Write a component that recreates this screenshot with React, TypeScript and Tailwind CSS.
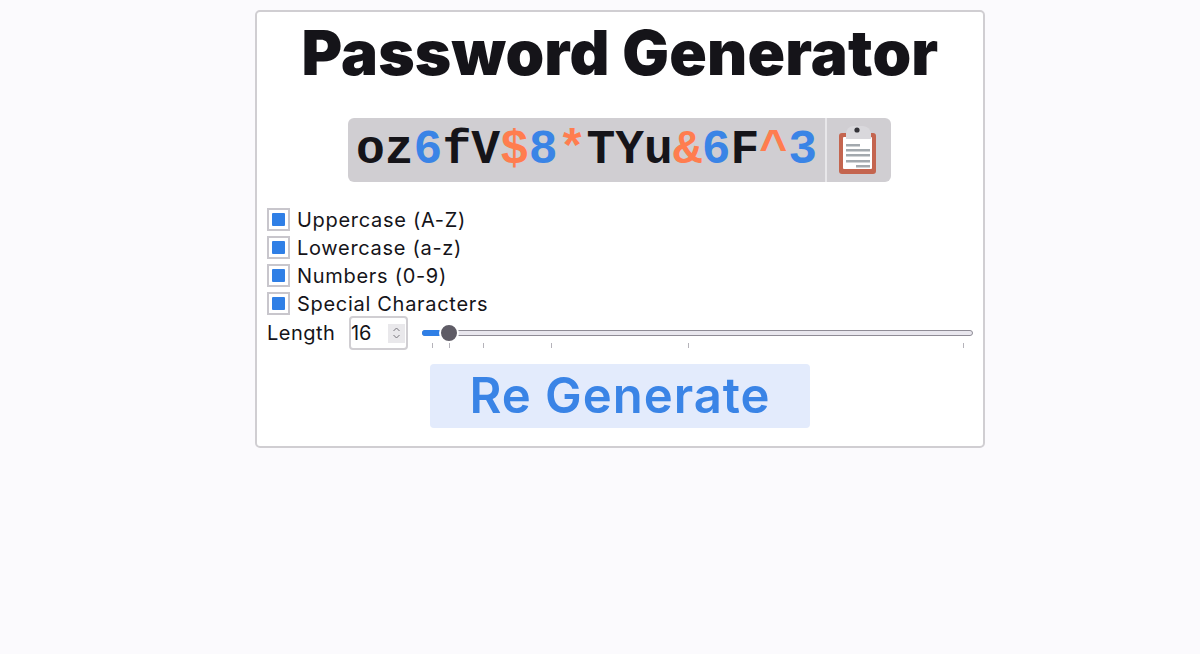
const password: [string, string][] = [
  ['oz', 'text-[#151419]'],
  ['6', 'text-[#3a84e6]'],
  ['fV', 'text-[#151419]'],
  ['$', 'text-[#ff7d4f]'],
  ['8', 'text-[#3a84e6]'],
  ['*', 'text-[#ff7d4f]'],
  ['TYu', 'text-[#151419]'],
  ['&', 'text-[#ff7d4f]'],
  ['6', 'text-[#3a84e6]'],
  ['F', 'text-[#151419]'],
  ['^', 'text-[#ff7d4f]'],
  ['3', 'text-[#3a84e6]'],
]

const options = ['Uppercase (A-Z)', 'Lowercase (a-z)', 'Numbers (0-9)', 'Special Characters']

function ClipboardIcon() {
  return (
    <svg width="44" height="50" viewBox="0 0 44 50">
      <rect x="2" y="8" width="37" height="41" rx="3" fill="#c4654f" />
      <rect x="6" y="12" width="29" height="32" rx="1" fill="#ffffff" />
      <path d="M9 14 L9 8 Q10 2 16 1 L26 1 Q33 2 34 8 L34 14 Z" fill="#d9d8dc" />
      <circle cx="20" cy="5" r="2.6" fill="#333338" />
      <rect x="9" y="19" width="14" height="2.5" fill="#a3a9ae" />
      <rect x="9" y="24" width="24" height="2.5" fill="#a3a9ae" />
      <rect x="9" y="29" width="24" height="2.5" fill="#a3a9ae" />
      <rect x="9" y="35" width="24" height="2.5" fill="#a3a9ae" />
      <rect x="19" y="40" width="14" height="2.5" fill="#a3a9ae" />
    </svg>
  )
}

export default function App() {
  return (
    <div className="min-h-[654px] bg-[#fbfafd] pt-[10px] font-['Inter','Liberation_Sans',sans-serif] text-[#151419]">
      <div className="ml-[255px] h-[438px] w-[730px] rounded-[5px] border-2 border-[#d0ced2] bg-white px-[10px]">
        <h1 className="mt-[5px] text-center text-[62px] leading-[72px] font-black tracking-[0.2px]">Password Generator</h1>

        {/* Password output */}
        <div className="mt-[29px] ml-[81px] flex h-[64px] w-[543px] items-center rounded-[6px] bg-[#d0ced2]">
          <div className="w-[477px] pl-[8px] font-['Liberation_Mono',monospace] text-[48px] leading-[64px] font-bold whitespace-nowrap">
            {password.map(([part, color], i) => (
              <span key={i} className={color}>{part}</span>
            ))}
          </div>
          <div className="h-full w-[2px] bg-[#e8e7ea]" />
          <div className="flex flex-1 items-center justify-center">
            <ClipboardIcon />
          </div>
        </div>

        {/* Options */}
        <div className="mt-[24px] flex flex-col">
          {options.map((label) => (
            <label key={label} className="flex h-[28px] items-start text-[20px] leading-[28px] tracking-[0.7px]">
              <span className="mt-[2px] flex h-[23px] w-[23px] items-center justify-center border-2 border-[#c8c6cc] bg-white">
                <span className="h-[13px] w-[13px] rounded-[1px] bg-[#2f7fe6]" />
              </span>
              <span className="ml-[7px]">{label}</span>
            </label>
          ))}
        </div>

        {/* Length */}
        <div className="mt-[-2px] flex h-[34px] items-center">
          <span className="w-[82px] text-[20px] tracking-[0.5px]">Length</span>
          <div className="flex h-[34px] w-[59px] items-center justify-between rounded-[4px] border-2 border-[#d0ced2] pr-[1px] text-[20px]">
            <span>16</span>
            <span className="flex h-[19px] w-[17px] items-center justify-center bg-[#e9e8eb]">
              <svg width="9" height="14" viewBox="0 0 9 14" fill="none" stroke="#77757c" strokeWidth="1">
                <path d="M1.5 5 L4.5 2 L7.5 5" />
                <path d="M1.5 9 L4.5 12 L7.5 9" />
              </svg>
            </span>
          </div>
          <div className="ml-[14px] h-[34px] w-[552px] pt-[14px]">
            <div className="relative h-[6px] rounded-full border border-[#8f8c96] bg-[#e9e7ee]">
              <div className="absolute top-[-1px] left-[-1px] h-[6px] w-[28px] rounded-l-full bg-[#2f7fe6]" />
              <div className="absolute top-[-8px] left-[16px] h-[20px] w-[20px] rounded-full border-2 border-white bg-[#5f5c66]" />
            </div>
            <div className="mt-[7px] flex h-[5px]">
              <span className="ml-[10px] w-px bg-[#b5b3ba]" />
              <span className="ml-[16px] w-px bg-[#b5b3ba]" />
              <span className="ml-[33px] w-px bg-[#b5b3ba]" />
              <span className="ml-[67px] w-px bg-[#b5b3ba]" />
              <span className="ml-[136px] w-px bg-[#b5b3ba]" />
              <span className="ml-[274px] w-px bg-[#b5b3ba]" />
            </div>
          </div>
        </div>

        <div className="mt-[14px] flex justify-center">
          <button className="h-[64px] w-[380px] rounded-[4px] bg-[#e3ebfc] text-[49px] leading-[64px] font-semibold tracking-[1px] text-[#3a84e6]">
            Re Generate
          </button>
        </div>
      </div>
    </div>
  )
}
